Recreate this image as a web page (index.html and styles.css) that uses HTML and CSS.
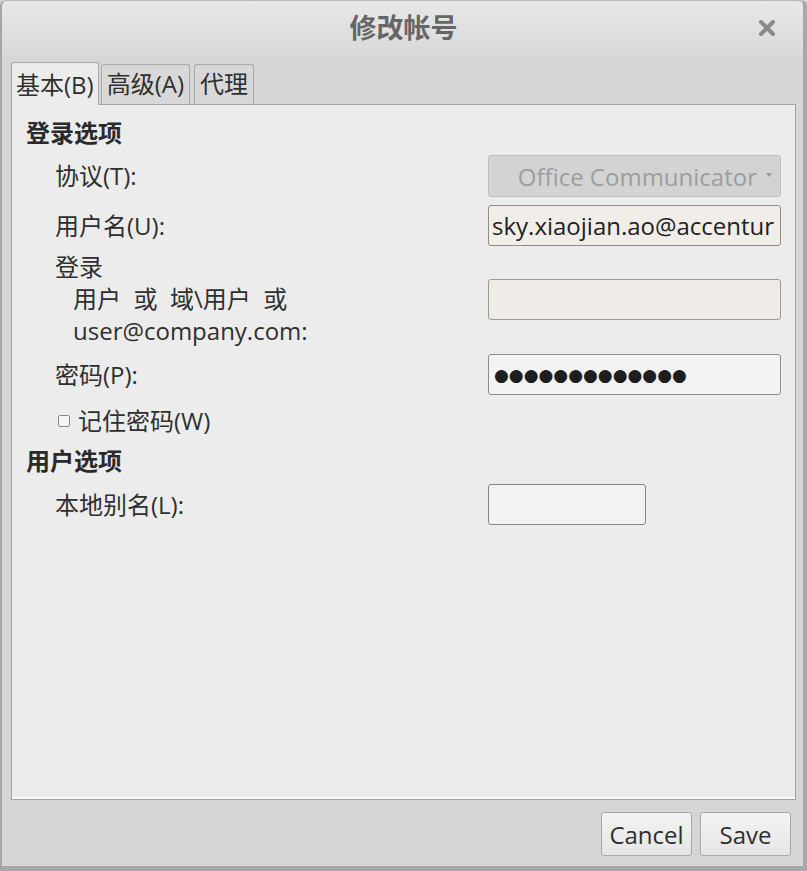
FILE: index.html
```html
<!DOCTYPE html>
<html lang="zh-CN">
<head>
<meta charset="utf-8">
<title>修改帐号</title>
<link rel="stylesheet" href="styles.css">
</head>
<body>
<div class="window">
  <div class="titlebar">
    <div class="title">修改帐号</div>
    <div class="close">
      <svg width="18" height="18" viewBox="0 0 18 18"><path d="M3 3 L15 15 M15 3 L3 15" stroke="#8a8a8a" stroke-width="4" stroke-linecap="round"/></svg>
    </div>
  </div>
  <div class="tabs">
    <div class="tab active">基本(B)</div>
    <div class="tab">高级(A)</div>
    <div class="tab">代理</div>
  </div>
  <div class="panel">
    <div class="heading h1">登录选项</div>
    <div class="row r-proto">
      <div class="label">协议(T):</div>
      <div class="field combo"><span class="combo-text">Office Communicator</span><span class="arrow"></span></div>
    </div>
    <div class="row r-user">
      <div class="label">用户名(U):</div>
      <div class="field entry warm"><span class="entry-text">sky.xiaojian.ao@accentur</span></div>
    </div>
    <div class="row r-login">
      <div class="label multi">
        <div>登录</div>
        <div class="sub">用户&nbsp; 或&nbsp; 域\用户&nbsp; 或</div>
        <div class="sub">user@company.com:</div>
      </div>
      <div class="field entry warm2"></div>
    </div>
    <div class="row r-pass">
      <div class="label">密码(P):</div>
      <div class="field entry light"><span class="dots">●●●●●●●●●●●●●</span></div>
    </div>
    <div class="check-row">
      <span class="checkbox"></span><span>记住密码(W)</span>
    </div>
    <div class="heading h2">用户选项</div>
    <div class="row r-alias">
      <div class="label">本地别名(L):</div>
      <div class="field-wrap"><div class="field entry short"></div></div>
    </div>
  </div>
  <div class="buttons">
    <button class="btn">Cancel</button>
    <button class="btn">Save</button>
  </div>
</div>
</body>
</html>
```

FILE: styles.css
```css
html, body {
  margin: 0;
  padding: 0;
}
body {
  width: 807px;
  height: 871px;
  overflow: hidden;
  font-family: "Open Sans", "Noto Sans CJK SC", sans-serif;
  color: #2f2f2f;
  background: #d6d6d6;
}
.window {
  box-sizing: border-box;
  width: 807px;
  height: 871px;
  background: #d6d6d6;
  border-left: 2px solid #a6a6a6;
  border-right: 4px solid #a8a8a8;
  border-bottom: 5px solid #a8a8a8;
  border-top: 1px solid #b8b8b8;
  border-radius: 6px 6px 0 0;
  display: flex;
  flex-direction: column;
}
.titlebar {
  height: 55px;
  display: flex;
  align-items: center;
  justify-content: center;
  position: relative;
  background: linear-gradient(#e8e8e8, #d9d9d9);
  border-radius: 6px 6px 0 0;
}
.title {
  font-family: "Noto Sans CJK SC", sans-serif;
  font-weight: 700;
  font-size: 27px;
  color: #666;
  margin-left: 2px;
  margin-bottom: 4px;
}
.close {
  position: absolute;
  right: 27px;
  top: 18px;
  width: 18px;
  height: 18px;
}
.close svg { display: block; }
.tabs {
  display: flex;
  align-items: flex-end;
  gap: 2px;
  padding-left: 9px;
  height: 48px;
}
.tab {
  box-sizing: border-box;
  height: 40px;
  padding: 0 5px;
  font-size: 24px;
  line-height: 38px;
  background: #d8d8d8;
  border: 1px solid #a9a9a9;
  border-bottom: none;
  border-radius: 3px 3px 0 0;
  color: #2f2f2f;
}
.tab + .tab + .tab { margin-left: 2px; }
.tab.active {
  height: 43px;
  line-height: 44px;
  background: #ececec;
  padding: 0 4px;
  position: relative;
  top: 1px;
  z-index: 1;
}
.panel {
  box-sizing: border-box;
  margin: 0 7px 0 9px;
  height: 696px;
  background: #ececec;
  border: 1px solid #a3a3a3;
  box-shadow: inset 0 -2px 0 #f8f8f8;
  padding: 0 14px 0 14px;
}
.heading {
  font-family: "Noto Sans CJK SC", sans-serif;
  font-weight: 700;
  font-size: 24px;
  line-height: 32px;
  color: #2a2a2a;
}
.h1 { margin-top: 11px; }
.h2 { margin-top: 7px; }
.row {
  display: flex;
  align-items: center;
  padding-left: 29px;
}
.label {
  flex: 1;
  font-size: 24px;
  line-height: 32px;
}
.r-proto { margin-top: 7px; }
.r-user { margin-top: 8px; }
.r-login { margin-top: 5px; }
.r-pass { margin-top: 7px; }
.r-alias { margin-top: 8px; }
.label.multi .sub { padding-left: 18px; }
.field {
  box-sizing: border-box;
  width: 293px;
  height: 42px;
  border-radius: 3px;
  border: 1px solid #8e8e8e;
  overflow: hidden;
  white-space: nowrap;
  font-size: 24px;
  display: flex;
  align-items: center;
}
.field-wrap { width: 293px; }
.combo {
  background: #d3d3d3;
  border-color: #bdbdbd;
  color: #9d9d9d;
  justify-content: flex-end;
  padding-right: 8px;
}
.combo-text { margin-right: 9px; }
.arrow {
  width: 0;
  height: 0;
  border-left: 3px solid transparent;
  border-right: 3px solid transparent;
  border-top: 4px solid #9a9a9a;
  margin-top: -2px;
}
.entry { padding-left: 3px; }
.warm { background: #f1eeea; height: 41px; }
.warm2 { background: #efece8; height: 41px; border-color: #9a9a9a; }
.light { background: #f3f3f3; height: 41px; }
.entry-text { color: #222; }
.dots {
  font-family: "DejaVu Sans", sans-serif;
  font-size: 17px;
  letter-spacing: 0px;
  color: #1e1e1e;
  padding-left: 2px;
}
.short {
  width: 158px;
  height: 41px;
  background: #f2f2f2;
  border-color: #858585;
}
.check-row {
  display: flex;
  align-items: center;
  padding-left: 32px;
  margin-top: 10px;
  font-size: 24px;
  line-height: 32px;
}
.checkbox {
  box-sizing: border-box;
  width: 12px;
  height: 12px;
  border: 1px solid #8a8a8a;
  border-radius: 2px;
  background: #f6f6f6;
  margin-right: 8px;
}
.buttons {
  display: flex;
  justify-content: flex-end;
  gap: 8px;
  padding-right: 12px;
  margin-top: 12px;
}
.btn {
  box-sizing: border-box;
  width: 91px;
  height: 44px;
  font-family: "Open Sans", sans-serif;
  font-size: 24px;
  color: #2f2f2f;
  background: linear-gradient(#f3f3f3, #e6e6e6);
  border: 1px solid #a8a8a8;
  border-radius: 3px;
  padding: 0;
}
```
